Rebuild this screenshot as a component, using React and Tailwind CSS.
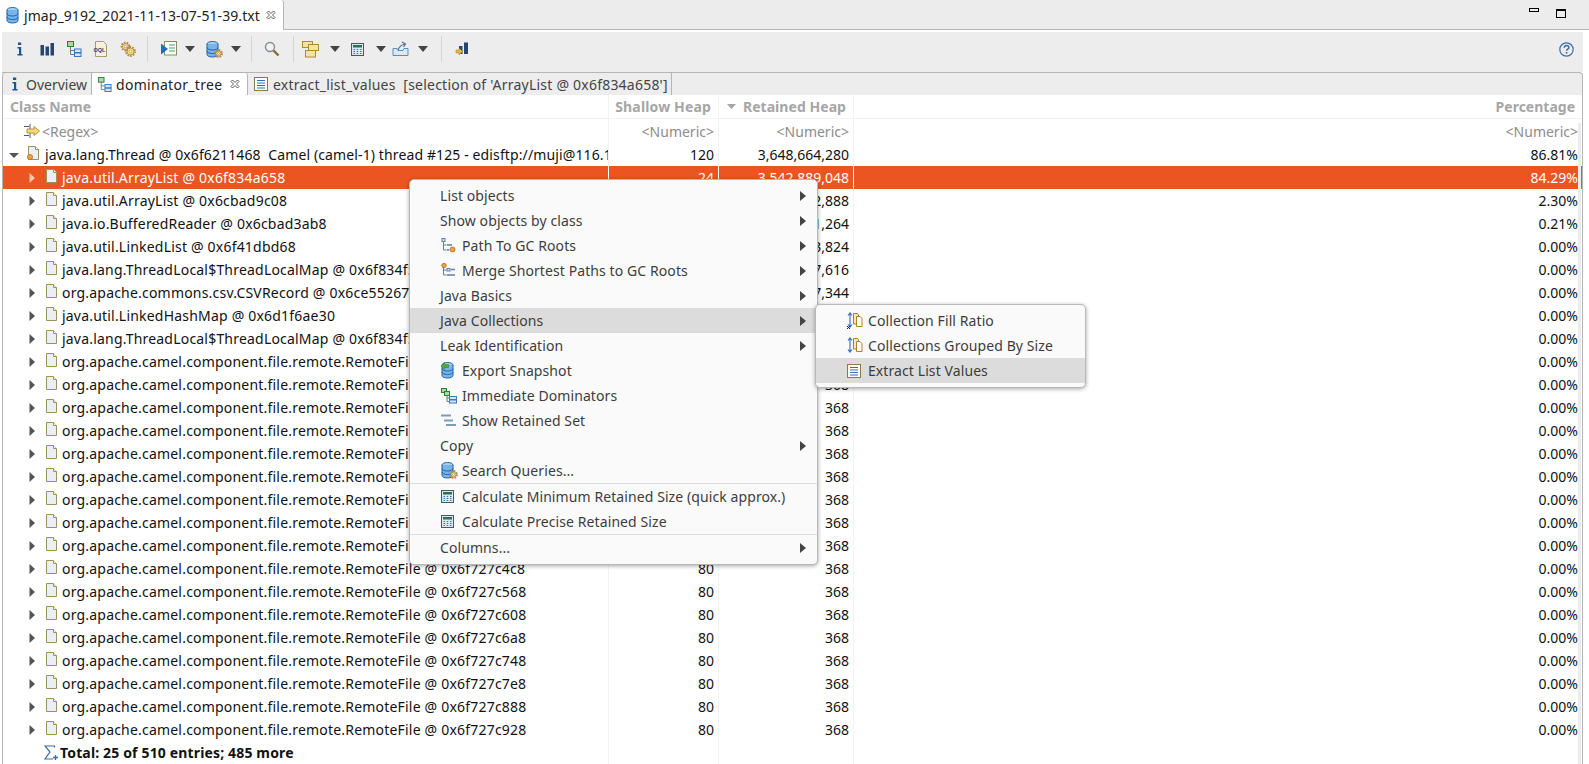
import React from 'react';

const Caret = ({ down, light }) => (
  <svg width="10" height="10" viewBox="0 0 10 10" className="shrink-0">
    {down
      ? <path d="M0 3h10L5 8z" fill="#555" />
      : <path d="M2.5 0v10L8 5z" fill={light ? '#f8c9b0' : '#555'} />}
  </svg>
);

const DropArrow = () => (
  <svg width="10" height="6" viewBox="0 0 10 6" className="shrink-0"><path d="M0 0h10L5 6z" fill="#444" /></svg>
);

const InfoIcon = () => <svg width="16" height="16" viewBox="0 0 16 16"><path d="M6 1.500h3.200v2.500H6zM5.500 6H9.200v7h1.300v1.500H5.500V13H7V7.500H5.500z" fill="#1a5596" /></svg>;

const BarsIcon = () => <svg width="16" height="16" viewBox="0 0 16 16"><path d="M1.500 4h3.500v10.500H1.500zM6.500 5.500h3.500v9H6.500zM11.500 2h3.500v12.500h-3.500z" fill="#27466f" /></svg>;

const TreeIcon = ({ size = 16 }) => (
  <svg width={size} height={size} viewBox="0 0 16 16">
    <rect x="1.500" y="0.500" width="6" height="5" fill="#a9d8a0" stroke="#2f7d3a" />
    <path d="M4.500 5.500v8h4M4.500 9.500h4" stroke="#777" fill="none" />
    <rect x="8.500" y="8" width="6.500" height="3.500" fill="#d5e6f7" stroke="#3a78c0" />
    <rect x="8.500" y="12" width="6.500" height="3.500" fill="#d5e6f7" stroke="#3a78c0" />
  </svg>
);

const DominatorIcon = () => (
  <svg width="16" height="16" viewBox="0 0 16 16">
    <rect x="0.500" y="0.500" width="5" height="4" fill="#a9d8a0" stroke="#2f7d3a" />
    <rect x="3.500" y="3.500" width="5" height="4" fill="#a9d8a0" stroke="#2f7d3a" />
    <path d="M6 7.500v6h2M6 10h2" stroke="#777" fill="none" />
    <rect x="8.500" y="8.500" width="7" height="3" fill="#d5e6f7" stroke="#3a78c0" />
    <rect x="8.500" y="12" width="7" height="3" fill="#d5e6f7" stroke="#3a78c0" />
  </svg>
);

const OqlIcon = () => (
  <svg width="16" height="16" viewBox="0 0 16 16">
    <path d="M2.500 0.500h8l3 3v12h-11z" fill="#f4f1e4" stroke="#a89a6a" />
    <text x="0.500" y="10.500" fontSize="5.500" fontWeight="700" fill="#23426e" fontFamily="Liberation Sans, sans-serif">OQL</text>
  </svg>
);

const GearIcon = ({ x = 8, y = 8, r = 5 }) => (
  <g>
    <circle cx={x} cy={y} r={r} fill="none" stroke="#b58a3a" strokeWidth="1.800" strokeDasharray="1.600 1.200" />
    <circle cx={x} cy={y} r={r - 1} fill="#f3dfae" stroke="#a67c2e" strokeWidth="0.800" />
    <circle cx={x} cy={y} r={r / 3.400} fill="#fff" stroke="#a67c2e" strokeWidth="0.600" />
  </g>
);

const GearsIcon = () => (
  <svg width="16" height="16" viewBox="0 0 16 16">
    <GearIcon x={5.500} y={5.500} r={4} />
    <GearIcon x={10.500} y={10.500} r={4.500} />
  </svg>
);

const ReportIcon = () => (
  <svg width="16" height="16" viewBox="0 0 16 16">
    <rect x="3.500" y="0.500" width="12" height="13.500" fill="#fff" stroke="#8a8a60" />
    <path d="M8 4h6M8 7h6M8 10h6" stroke="#4aa05a" />
    <path d="M0 2.500l7 5.500-7 5.500z" fill="#1f6fb8" />
  </svg>
);

const DbIcon = ({ badge }) => (
  <svg width="17" height="17" viewBox="0 0 17 17">
    <ellipse cx="6.500" cy="3" rx="5.500" ry="2.500" fill="#a5d0f3" stroke="#1f62a8" />
    <path d="M1 3v10.500C1 15 3.500 16 6.500 16s5.500-1 5.500-2.500V3" fill="#78b4e8" stroke="#1f62a8" />
    <path d="M1 6.500C1 8 3.500 9 6.500 9s5.500-1 5.500-2.500M1 10c0 1.500 2.500 2.500 5.500 2.500S12 11.500 12 10" fill="none" stroke="#1f62a8" />
    {badge === 'gear' && <GearIcon x={12.500} y={12.500} r={3.600} />}
    {badge === 'arrow' && <path d="M0 4l3.500-3.500v2h4v3h-4v2z" fill="#56a83c" stroke="#2f7d3a" strokeWidth="0.500" />}
  </svg>
);

const SearchIcon = () => (
  <svg width="16" height="16" viewBox="0 0 16 16">
    <circle cx="6" cy="6" r="4.500" fill="#eef3f7" stroke="#8a8a8a" strokeWidth="1.400" />
    <path d="M9.500 9.500l5 5" stroke="#8a6a3a" strokeWidth="2.400" />
  </svg>
);

const StackIcon = () => (
  <svg width="17" height="17" viewBox="0 0 17 17">
    <rect x="0.500" y="0.500" width="10" height="6" fill="#f6e2a8" stroke="#b08a32" />
    <rect x="6.500" y="3.500" width="10" height="6" fill="#f6e2a8" stroke="#b08a32" />
    <rect x="3.500" y="9.500" width="10" height="6.500" fill="#f6e2a8" stroke="#b08a32" />
  </svg>
);

const CalcIcon = () => (
  <svg width="13" height="13" viewBox="0 0 13 13">
    <rect x="0.500" y="0.500" width="12" height="12" fill="#d8e8f0" stroke="#555" />
    <rect x="2" y="2" width="9" height="2.500" fill="#2f6f5a" />
    <path d="M2.500 6.500h1.500M5.700 6.500h1.500M9 6.500h1.500M2.500 8.500h1.500M5.700 8.500h1.500M9 8.500h1.500M2.500 10.500h1.500M5.700 10.500h1.500M9 10.500h1.500" stroke="#3a78c0" />
  </svg>
);

const ExportIcon = () => (
  <svg width="17" height="16" viewBox="0 0 17 16">
    <path d="M1 7.500v7h15v-7h-4l-1 2H6l-1-2z" fill="#dbe8f5" stroke="#5b8cc0" />
    <path d="M6 9c1-3 3-5 7-6M10 1l3.500 2-2 3" fill="none" stroke="#4f7299" strokeWidth="1.200" />
  </svg>
);

const BarsArrowIcon = () => (
  <svg width="16" height="17" viewBox="0 0 16 17">
    <path d="M4 5h3.500v8H4zM9 1.500h4v11.500H9z" fill="#27466f" />
    <path d="M1 9h3V7l3.500 3.500L4 14v-2H1z" fill="#e8b93c" stroke="#9c7a20" strokeWidth="0.500" />
  </svg>
);

const HelpIcon = () => (
  <svg width="15" height="15" viewBox="0 0 15 15">
    <circle cx="7.500" cy="7.500" r="6.700" fill="none" stroke="#3a6ea5" strokeWidth="1.200" />
    <path d="M5.300 5.700c0-3 4.600-3 4.600-.2 0 1.700-2.300 1.700-2.300 3.300" fill="none" stroke="#3a6ea5" strokeWidth="1.500" />
    <rect x="6.800" y="10" width="1.600" height="1.600" fill="#3a6ea5" />
  </svg>
);

const CloseX = () => (
  <svg width="10" height="10" viewBox="0 0 10 10" className="shrink-0">
    <path d="M1 2.500L2.500 1 5 3.500 7.500 1 9 2.500 6.500 5 9 7.500 7.500 9 5 6.500 2.500 9 1 7.500 3.500 5z" fill="#fff" stroke="#333" strokeWidth="0.800" />
  </svg>
);

const ListIcon = () => (
  <svg width="14" height="14" viewBox="0 0 14 14">
    <rect x="0.500" y="0.500" width="13" height="13" fill="#fff" stroke="#8a7a4a" />
    <path d="M3 3.500h8M3 6h8M3 8.500h8M3 11h8" stroke="#2f6fb8" />
  </svg>
);

const FileIcon = ({ dot }) => (
  <svg width="13" height="15" viewBox="0 0 13 15" className="shrink-0 -mt-[3px]">
    <path d="M1.500 0.500h7l3 3v10h-10z" fill="#eaeef6" stroke="#a0915c" />
    <path d="M8.500 0.500v3h3" fill="#fff" stroke="#a0915c" />
    {dot && <circle cx="3" cy="11" r="2.600" fill="#f0a040" stroke="#b06a18" strokeWidth="0.700" />}
  </svg>
);

const RegexIcon = () => (
  <svg width="16" height="16" viewBox="0 0 16 16" className="shrink-0">
    <path d="M0 3.500h5M0 12.500h5M6 1v5M6 10v5" stroke="#4a5a70" />
    <path d="M3 6h7V3.500L15.500 8 10 12.500V10H3z" fill="#f5d878" stroke="#a8841f" strokeWidth="0.800" />
  </svg>
);

const PathIcon = ({ top }) => (
  <svg width="15" height="15" viewBox="0 0 15 15">
    <path d="M2.500 3v9M2.500 7h3M2.500 12h3" stroke="#5b7fa8" fill="none" />
    {top
      ? <>
          <rect x="6" y="5.500" width="3" height="2.500" fill="#d5e6f7" stroke="#5b7fa8" />
          <path d="M10 6.500h4M6 12h8" stroke="#5b7fa8" strokeWidth="1.500" />
          <circle cx="3" cy="2.500" r="2.200" fill="#f0a040" stroke="#b06a18" strokeWidth="0.800" />
        </>
      : <>
          <rect x="1" y="0.500" width="3" height="3" fill="#d5e6f7" stroke="#5b7fa8" />
          <path d="M6 7h5M6 12h2" stroke="#5b7fa8" strokeWidth="1.500" />
          <circle cx="11.500" cy="11.500" r="2.500" fill="#f0a040" stroke="#b06a18" strokeWidth="0.800" />
        </>}
  </svg>
);

const RetainedIcon = () => (
  <svg width="15" height="13" viewBox="0 0 15 13">
    <path d="M0 1.500h10M3 6.500h9M5 11h10" stroke="#7f9ab8" strokeWidth="2" />
  </svg>
);

const CollectionIcon = ({ mark }) => (
  <svg width="16" height="17" viewBox="0 0 16 17">
    <path d="M3 1.500v13M1 3.500l2-2.500 2 2.500M1 12.500L3 15l2-2.500" fill="none" stroke="#2f6fb8" strokeWidth="1.100" />
    <path d="M6.500 1.500h4l1 1.500v9h-5z" fill="#f6e8bc" stroke="#a8841f" />
    <path d="M9.500 4.500h3.500l2 2v8h-5.500z" fill="#fff" stroke="#a8841f" />
    {mark && <path d="M0 14l3 3M3 14l-3 3" stroke="#111" strokeWidth="0.900" />}
  </svg>
);

const SumIcon = () => (
  <svg width="15" height="16" viewBox="0 0 15 16" className="shrink-0">
    <path d="M10.500 2.500V1H1l5 6-5 7h8" fill="none" stroke="#3a6ea5" strokeWidth="1.200" />
    <path d="M11.500 10v5M9 12.500h5" stroke="#3a6ea5" strokeWidth="1.400" />
  </svg>
);

const toolbar = [<InfoIcon />, <BarsIcon />, <TreeIcon />, <OqlIcon />, <GearsIcon />];

const Sep = () => <div className="w-px h-[26px] bg-[#d4d4d4] shrink-0" />;

const Toolbar = () => (
  <div className="h-10 mt-[2px] ml-[2px] mr-[6px] bg-[#ededed] flex items-center pl-[4px] pb-[6px]">
    {toolbar.map((t, i) => <div key={i} className="w-[27px] flex justify-center">{t}</div>)}
    <div className="w-[6px]" /><Sep />
    <div className="w-[13px]" /><ReportIcon /><div className="w-[8px]" /><DropArrow />
    <div className="w-[11px]" /><DbIcon badge="gear" /><div className="w-[8px]" /><DropArrow />
    <div className="w-[10px]" /><Sep />
    <div className="w-[12px]" /><SearchIcon /><div className="w-[13px]" /><Sep />
    <div className="w-[8px]" /><StackIcon /><div className="w-[11px]" /><DropArrow />
    <div className="w-[11px]" /><CalcIcon /><div className="w-[12px]" /><DropArrow />
    <div className="w-[6px]" /><ExportIcon /><div className="w-[9px]" /><DropArrow />
    <div className="w-[13px]" /><Sep />
    <div className="w-[13px]" /><BarsArrowIcon />
    <div className="ml-auto mr-[9px]"><HelpIcon /></div>
  </div>
);

const TabStrip = () => (
  <div className="h-[23px] ml-[2px] mr-[6px] flex items-end bg-[#ededed] border-t border-r border-[#b5b5b5] rounded-tr-[4px] text-[14px]">
    <div className="h-[22px] w-[90px] flex items-center gap-[7px] pl-[4px] border-l border-r border-[#b5b5b5] rounded-tl-[4px] text-[#444]">
      <InfoIcon /><span className="-ml-[4px]">Overview</span>
    </div>
    <div className="h-[22px] w-[156px] flex items-center pl-[5px] border-r border-[#b5b5b5] bg-white rounded-t-[3px] text-[#222]">
      <TreeIcon size={15} /><span className="ml-[4px] tracking-[0.3px]">dominator_tree</span><span className="ml-[8px]"><CloseX /></span>
    </div>
    <div className="h-[22px] w-[424px] flex items-center pl-[6px] border-r border-[#b5b5b5] text-[#444] whitespace-pre">
      <ListIcon /><span className="ml-[5px] tracking-[0.22px]">extract_list_values  [selection of 'ArrayList @ 0x6f834a658']</span>
    </div>
  </div>
);

const base = [
  ['java.util.ArrayList @ 0x6f834a658', '24', '3,542,889,048', '84.29%', true],
  ['java.util.ArrayList @ 0x6cbad9c08', '24', '96,662,888', '2.30%'],
  ['java.io.BufferedReader @ 0x6cbad3ab8', '72', '8,901,264', '0.21%'],
  ['java.util.LinkedList @ 0x6f41dbd68', '32', '123,824', '0.00%'],
  ['java.lang.ThreadLocal$ThreadLocalMap @ 0x6f834f5a8', '24', '47,616', '0.00%'],
  ['org.apache.commons.csv.CSVRecord @ 0x6ce552670', '40', '17,344', '0.00%'],
  ['java.util.LinkedHashMap @ 0x6d1f6ae30', '56', '1,368', '0.00%'],
  ['java.lang.ThreadLocal$ThreadLocalMap @ 0x6f834f5c0', '24', '1,104', '0.00%'],
];

const addrs = ['bf28', 'bfc8', 'c068', 'c108', 'c1a8', 'c248', 'c2e8', 'c388', 'c428', 'c4c8', 'c568', 'c608', 'c6a8', 'c748', 'c7e8', 'c888', 'c928'];

const rows = [
  ...base,
  ...addrs.map(a => [`org.apache.camel.component.file.remote.RemoteFile @ 0x6f727${a}`, '80', '368', '0.00%']),
];

const Row = ({ indent, caret, icon, name, shallow, retained, percent, selected, tight }) => (
  <div className={`h-[23px] flex shrink-0 ${selected ? 'bg-[#ec5521] text-white' : 'text-[#111]'}`}>
    <div className={`w-[606px] shrink-0 flex items-center overflow-hidden whitespace-pre border-r ${selected ? 'border-white' : 'border-[#f2f2f2]'}`} style={{ paddingLeft: indent }}>
      <div className="w-[16px] shrink-0 flex">{caret}</div>
      {icon}
      <span className={`ml-[4px] ${tight ? 'tracking-[0.12px]' : 'tracking-[0.2px]'}`}>{name}</span>
    </div>
    <div className={`w-[110px] shrink-0 flex items-center justify-end pr-[4px] border-r ${selected ? 'border-white' : 'border-[#f2f2f2]'}`}>{shallow}</div>
    <div className={`w-[135px] shrink-0 flex items-center justify-end pr-[4px] border-r ${selected ? 'border-white' : 'border-[#f2f2f2]'}`}>{retained}</div>
    <div className="flex-1 flex items-center justify-end pr-[4px]">{percent}</div>
  </div>
);

const Table = () => (
  <div className="ml-[2px] mr-[6px] h-[669px] overflow-hidden bg-white border-x border-[#b5b5b5] text-[14px] relative">
    <div className="h-[24px] flex font-bold text-[#a6a6a6] border-b border-[#f2f2f2]">
      <div className="w-[606px] flex items-center pl-[7px] border-r border-[#f2f2f2]">Class Name</div>
      <div className="w-[110px] flex items-center justify-end pr-[7px] border-r border-[#f2f2f2] tracking-[0.15px]">Shallow Heap</div>
      <div className="w-[135px] flex items-center justify-end pr-[7px] border-r border-[#f2f2f2] gap-[7px] tracking-[0.05px]">
        <svg width="9" height="5" viewBox="0 0 9 5"><path d="M0 0h9L4.500 5z" fill="#a6a6a6" /></svg>
        Retained Heap
      </div>
      <div className="flex-1 flex items-center justify-end pr-[7px]">Percentage</div>
    </div>
    <div className="h-[24px] flex text-[#8c8c8c]">
      <div className="w-[606px] flex items-center pl-[21px] border-r border-[#f2f2f2]"><RegexIcon /><span className="ml-[2px]">&lt;Regex&gt;</span></div>
      <div className="w-[110px] flex items-center justify-end pr-[4px] border-r border-[#f2f2f2]">&lt;Numeric&gt;</div>
      <div className="w-[135px] flex items-center justify-end pr-[4px] border-r border-[#f2f2f2]">&lt;Numeric&gt;</div>
      <div className="flex-1 flex items-center justify-end pr-[4px]">&lt;Numeric&gt;</div>
    </div>
    <Row tight indent={6} caret={<Caret down />} icon={<span className="ml-[2px] mr-[1px] flex"><FileIcon dot /></span>} name="java.lang.Thread @ 0x6f6211468  Camel (camel-1) thread #125 - edisftp://muji@116.1" shallow="120" retained="3,648,664,280" percent="86.81%" />
    {rows.map(r => (
      <Row key={r[0]} indent={24} caret={<Caret light={r[4]} />} icon={<span className="ml-[2px] flex"><FileIcon /></span>} name={r[0]} shallow={r[1]} retained={r[2]} percent={r[3]} selected={r[4]} />
    ))}
    <div className="h-[23px] flex">
      <div className="w-[606px] flex items-center pl-[41px] font-bold text-[#111] border-r border-[#f2f2f2]">
        <SumIcon /><span className="ml-[1px] tracking-[0.15px]">Total: 25 of 510 entries; 485 more</span>
      </div>
      <div className="w-[110px] border-r border-[#f2f2f2]" />
      <div className="w-[135px] border-r border-[#f2f2f2]" />
    </div>
    <div className="absolute right-[1px] top-[28px] bottom-0 w-[3px] bg-[#ececec]" />
  </div>
);

const MenuItem = ({ label, icon, arrow, active }) => (
  <div className={`h-[25px] flex items-center relative tracking-[0.09px] ${active ? 'bg-[#dcdcdc]' : ''}`}>
    {icon
      ? <><div className="w-[21px] ml-[31px] shrink-0 flex">{icon}</div><span>{label}</span></>
      : <span className="ml-[30px]">{label}</span>}
    {arrow && <svg width="6" height="10" viewBox="0 0 6 10" className="absolute right-[11px]"><path d="M0 0v10l6-5z" fill="#444" /></svg>}
  </div>
);

const MenuSep = () => <div className="h-px bg-[#dedede]" />;

const ContextMenu = () => (
  <div className="absolute left-[409px] top-[179px] w-[409px] h-[386px] pt-[3px] bg-[#fafafa] border border-[#b8b8b8] rounded-[5px] shadow-[0_1px_4px_rgba(0,0,0,0.35)] text-[14px] text-[#3d3d3d]">
    <MenuItem label="List objects" arrow />
    <MenuItem label="Show objects by class" arrow />
    <MenuItem label="Path To GC Roots" arrow icon={<PathIcon />} />
    <MenuItem label="Merge Shortest Paths to GC Roots" arrow icon={<PathIcon top />} />
    <MenuItem label="Java Basics" arrow />
    <MenuItem label="Java Collections" arrow active />
    <MenuItem label="Leak Identification" arrow />
    <MenuItem label="Export Snapshot" icon={<DbIcon badge="arrow" />} />
    <MenuItem label="Immediate Dominators" icon={<DominatorIcon />} />
    <MenuItem label="Show Retained Set" icon={<RetainedIcon />} />
    <MenuItem label="Copy" arrow />
    <MenuItem label="Search Queries..." icon={<DbIcon badge="gear" />} />
    <MenuSep />
    <MenuItem label="Calculate Minimum Retained Size (quick approx.)" icon={<CalcIcon />} />
    <MenuItem label="Calculate Precise Retained Size" icon={<CalcIcon />} />
    <MenuSep />
    <MenuItem label="Columns..." arrow />
  </div>
);

const SubMenu = () => (
  <div className="absolute left-[815px] top-[304px] w-[271px] h-[84px] pt-[3px] bg-[#fafafa] border border-[#b8b8b8] rounded-[5px] shadow-[0_1px_4px_rgba(0,0,0,0.35)] text-[14px] text-[#3d3d3d]">
    <MenuItem label="Collection Fill Ratio" icon={<CollectionIcon mark />} />
    <MenuItem label="Collections Grouped By Size" icon={<CollectionIcon />} />
    <MenuItem label="Extract List Values" icon={<ListIcon />} active />
  </div>
);

const App = () => (
  <div className="w-[1589px] h-[764px] overflow-hidden bg-white relative" style={{ fontFamily: '"Noto Sans", sans-serif' }}>
    <div className="h-[30px] bg-[#ececec] border-b border-[#b5b5b5] flex relative">
      <div className="w-[284px] h-[30px] bg-white border-r border-[#b5b5b5] flex items-center pl-[6px] text-[14px] text-[#222] rounded-tr-[3px]">
        <DbIcon />
        <span className="ml-[1px] tracking-[0.07px]">jmap_9192_2021-11-13-07-51-39.txt</span>
        <span className="ml-[6px]"><CloseX /></span>
      </div>
      <div className="absolute left-[1529px] top-[8px] w-[10px] h-[4px] border border-black" />
      <div className="absolute left-[1556px] top-[9px] w-[10px] h-[9px] border border-black border-t-[2px]" />
    </div>
    <Toolbar />
    <TabStrip />
    <Table />
    <ContextMenu />
    <SubMenu />
  </div>
);

export default App;
